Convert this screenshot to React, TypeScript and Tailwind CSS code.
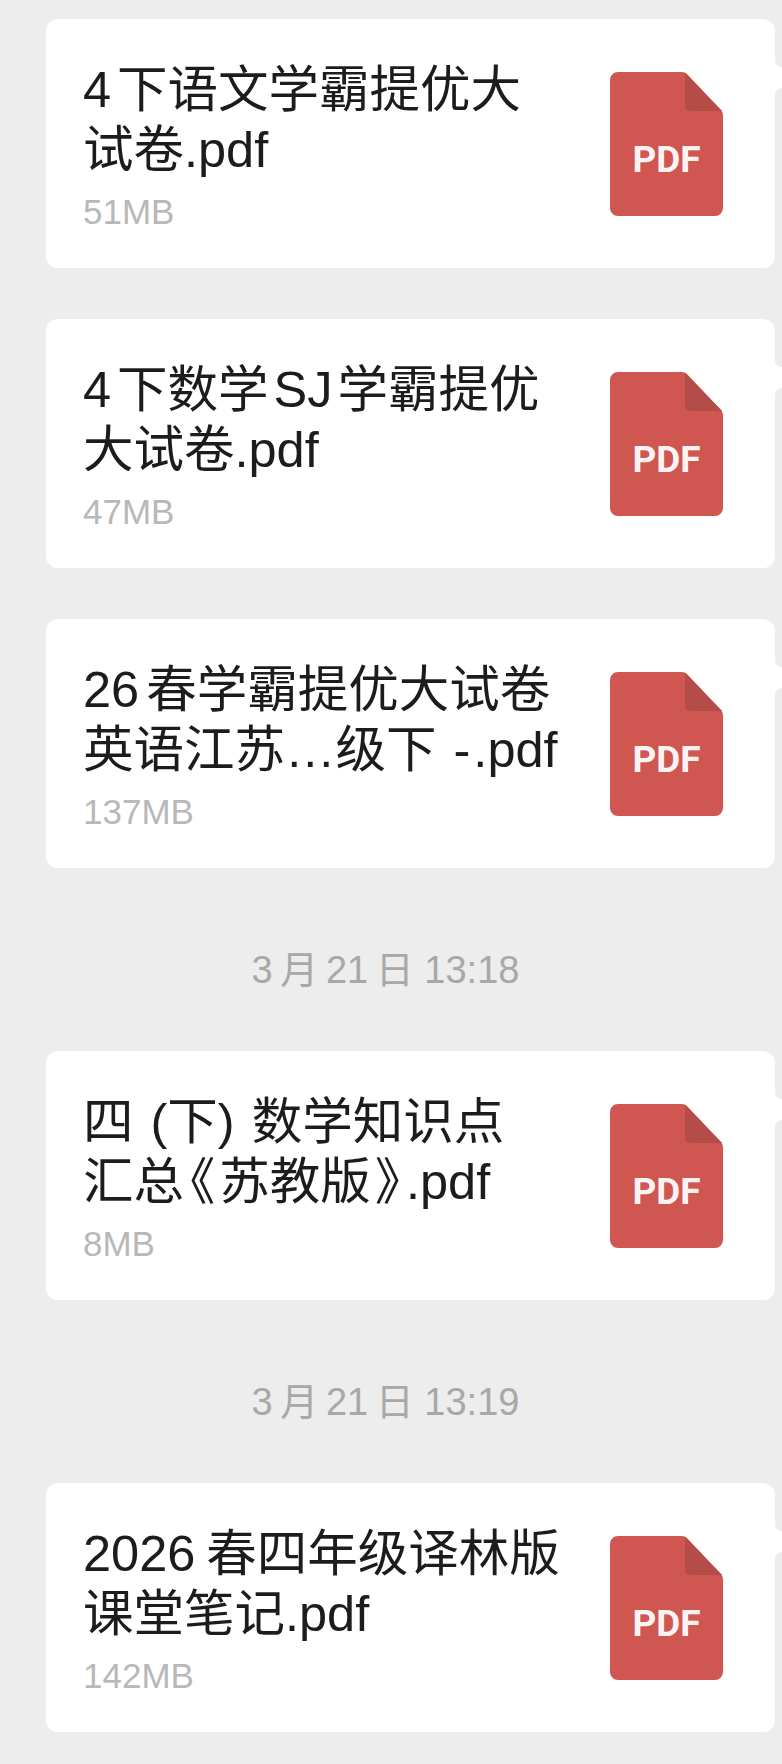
import type { ReactNode } from "react";

const thin = "\u2009";

const files: { top?: string; time?: string; title: ReactNode[]; size: string }[] = [
  {
    top: "mt-[19px]",
    title: [
      <>
        4<span className="ml-[6px]">下语文学霸提优大</span>
      </>,
      "试卷.pdf",
    ],
    size: "51MB",
  },
  {
    top: "mt-[51px]",
    title: [
      <>
        4<span className="ml-[6px]">下数学</span>
        <span className="ml-[5px]">SJ</span>
        <span className="ml-[5px]">学霸提优</span>
      </>,
      "大试卷.pdf",
    ],
    size: "47MB",
  },
  {
    top: "mt-[51px]",
    title: [
      <>
        26<span className="ml-[7px]">春学霸提优大试卷</span>
      </>,
      <>
        英语江苏…级下 <span className="px-[3px]">-</span>.pdf
      </>,
    ],
    size: "137MB",
  },
  {
    time: `3${thin}月${thin}21${thin}日 13:18`,
    title: [
      <span className="[word-spacing:3px]">四 (下) 数学知识点</span>,
      <>
        汇总<span className="mx-[5px] [font-feature-settings:'palt']">《</span>苏教版
        <span className="mx-[5px] [font-feature-settings:'palt']">》</span>.pdf
      </>,
    ],
    size: "8MB",
  },
  {
    time: `3${thin}月${thin}21${thin}日 13:19`,
    title: [
      <>
        2026<span className="ml-[11px]">春四年级译林版</span>
      </>,
      "课堂笔记.pdf",
    ],
    size: "142MB",
  },
];

function PdfIcon() {
  return (
    <div className="relative h-[144px] w-[113px] shrink-0">
      <svg viewBox="0 0 113 144" className="absolute inset-0 h-full w-full">
        <path d="M8 0H72Q75 0 77 2L111 38Q113 40 113 43V136a8 8 0 0 1-8 8H8a8 8 0 0 1-8-8V8a8 8 0 0 1 8-8Z" fill="#cf5651" />
        <path d="M75 1L112 39H80a5 5 0 0 1-5-5Z" fill="#b44c47" />
      </svg>
      <span className="absolute inset-x-0 top-[66px] text-center font-['Roboto',sans-serif] text-[37px] font-bold leading-[44px] text-[#fdf3f2]">
        PDF
      </span>
    </div>
  );
}

export default function App() {
  return (
    <div className="h-[1764px] w-[782px] overflow-hidden bg-[#ededed] pl-[46px] pr-[7px] font-['Liberation_Sans','Noto_Sans_CJK_SC',sans-serif]">
      {files.map((file, i) => (
        <div key={i}>
          {file.time && (
            <div className="flex h-[183px] items-center justify-center pr-[50px] pt-[21px] text-[38px] text-[#a8a8a8]">
              {file.time}
            </div>
          )}
          <div className={`${file.top ?? ""} relative flex h-[249px] items-center justify-between rounded-[12px] bg-white pl-[37px] pr-[52px]`}>
            <div className="pt-[4px]">
              <div className="text-[50.5px] leading-[60px] text-[#1c1c1c]">
                {file.title.map((line, j) => (
                  <div key={j} className="whitespace-nowrap">{line}</div>
                ))}
              </div>
              <div className="mt-[12px] text-[35px] leading-[40px] text-[#b8b8b8]">{file.size}</div>
            </div>
            <PdfIcon />
            <svg viewBox="0 0 7 33" className="absolute -right-[7px] top-[42px] h-[33px] w-[7px]">
              <path d="M0 0Q1 6 7 6V27Q1 27 0 33Z" fill="#ffffff" />
            </svg>
          </div>
        </div>
      ))}
    </div>
  );
}
